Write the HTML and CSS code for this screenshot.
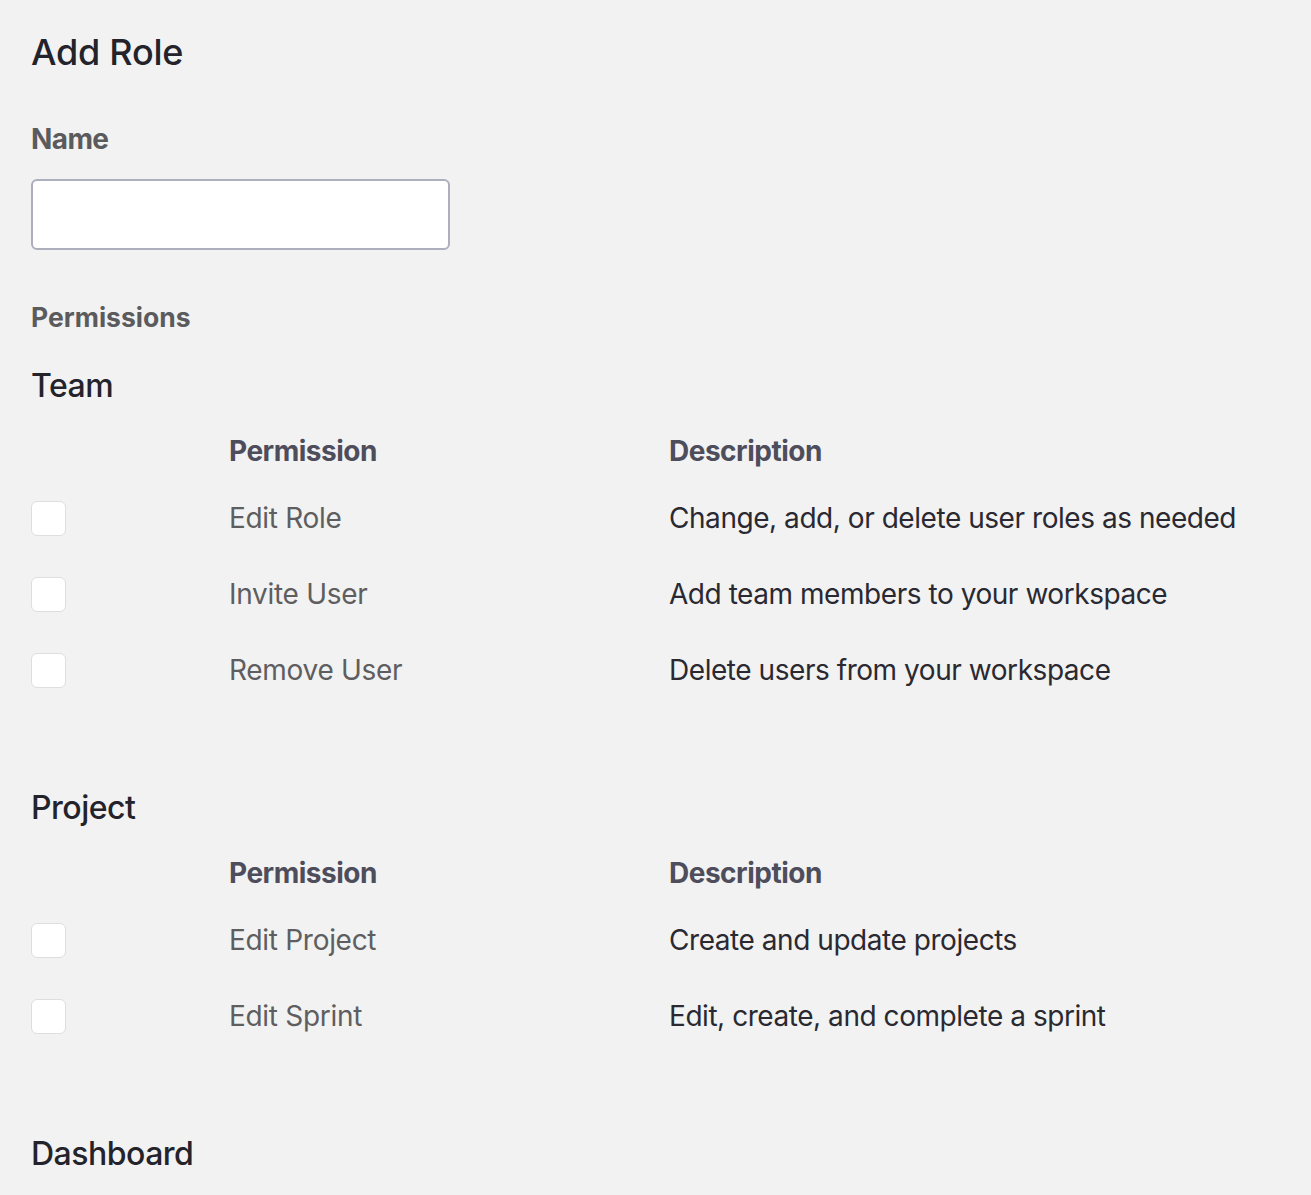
FILE: index.html
```html
<!DOCTYPE html>
<html lang="en">
<head>
<meta charset="utf-8">
<title>Add Role</title>
<link rel="stylesheet" href="styles.css">
</head>
<body>
<main class="page">
  <h1 class="title">Add Role</h1>
  <label class="field-label" for="role-name">Name</label>
  <input class="text-input" id="role-name" type="text">
  <div class="group-label">Permissions</div>

  <section class="perm-section">
    <h2 class="section-title">Team</h2>
    <div class="perm-table">
      <div class="perm-row perm-head">
        <span></span><span>Permission</span><span>Description</span>
      </div>
      <div class="perm-row">
        <span class="check"></span><span class="perm-name">Edit Role</span><span class="perm-desc">Change, add, or delete user roles as needed</span>
      </div>
      <div class="perm-row">
        <span class="check"></span><span class="perm-name">Invite User</span><span class="perm-desc">Add team members to your workspace</span>
      </div>
      <div class="perm-row">
        <span class="check"></span><span class="perm-name">Remove User</span><span class="perm-desc">Delete users from your workspace</span>
      </div>
    </div>
  </section>

  <section class="perm-section">
    <h2 class="section-title">Project</h2>
    <div class="perm-table">
      <div class="perm-row perm-head">
        <span></span><span>Permission</span><span>Description</span>
      </div>
      <div class="perm-row">
        <span class="check"></span><span class="perm-name">Edit Project</span><span class="perm-desc">Create and update projects</span>
      </div>
      <div class="perm-row">
        <span class="check"></span><span class="perm-name">Edit Sprint</span><span class="perm-desc">Edit, create, and complete a sprint</span>
      </div>
    </div>
  </section>

  <section class="perm-section">
    <h2 class="section-title">Dashboard</h2>
  </section>
</main>
</body>
</html>
```

FILE: styles.css
```css
html, body {
  margin: 0;
  padding: 0;
  background: #f2f2f2;
}
body {
  font-family: "Inter", "Liberation Sans", sans-serif;
  color: #26252d;
  overflow: hidden;
}
.page {
  padding: 30px 0 0 31px;
  display: flex;
  flex-direction: column;
  align-items: flex-start;
}
.title {
  margin: 0;
  font-size: 36px;
  line-height: 44px;
  font-weight: 500;
  letter-spacing: -0.25px;
  color: #24232b;
}
.field-label {
  margin-top: 47px;
  font-size: 28px;
  line-height: 36px;
  font-weight: 700;
  letter-spacing: -0.6px;
  color: #5b5b5d;
}
.text-input {
  margin-top: 22px;
  box-sizing: border-box;
  width: 419px;
  height: 71px;
  border: 2px solid #adafbc;
  border-radius: 6px;
  background: #fff;
  outline: none;
  font: inherit;
}
.group-label {
  margin-top: 50px;
  font-size: 26.5px;
  line-height: 34px;
  font-weight: 700;
  letter-spacing: 0;
  color: #5b5b5d;
}
.perm-section {
  align-self: stretch;
  margin-top: 32px;
}
.perm-section + .perm-section {
  margin-top: 80px;
}
.section-title {
  margin: 0;
  font-size: 32px;
  line-height: 40px;
  font-weight: 500;
  letter-spacing: -0.5px;
  color: #24232b;
}
.perm-table {
  margin-top: 16px;
  display: flex;
  flex-direction: column;
}
.perm-row {
  display: grid;
  grid-template-columns: 198px 440px 1fr;
  align-items: center;
  height: 76px;
  font-size: 28px;
  line-height: 36px;
}
.perm-head {
  height: 58px;
  font-weight: 700;
  letter-spacing: -0.5px;
  color: #4e4d5b;
}
.check {
  box-sizing: border-box;
  width: 35px;
  height: 35px;
  background: #fff;
  border: 1.5px solid #dedede;
  border-radius: 6px;
}
.perm-name {
  letter-spacing: -0.3px;
  color: #5e5e60;
}
.perm-desc {
  letter-spacing: -0.45px;
  color: #2a2931;
}
```
